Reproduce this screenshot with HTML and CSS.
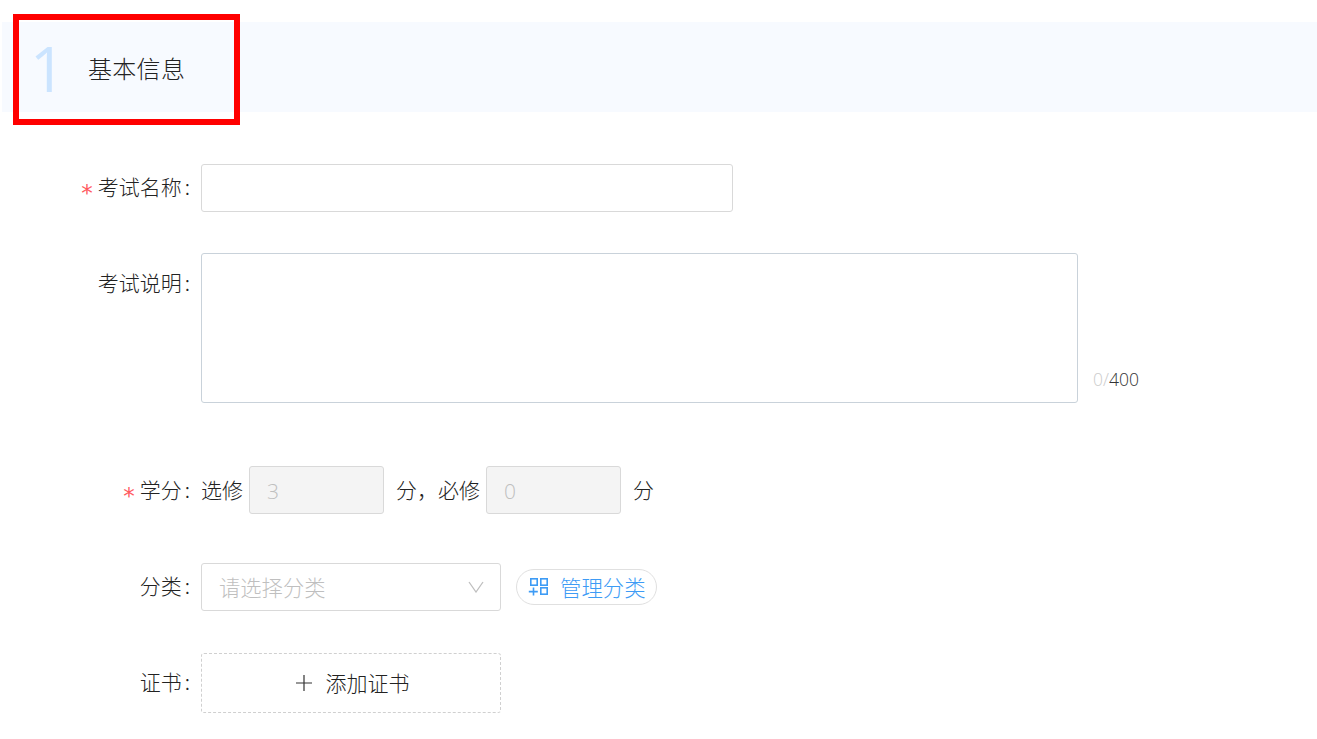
FILE: index.html
```html
<!DOCTYPE html>
<html lang="zh-CN">
<head>
<meta charset="utf-8">
<title>基本信息</title>
<link rel="stylesheet" href="styles.css">
</head>
<body>
<section class="section-head">
  <span class="step">1</span>
  <h2 class="section-title">基本信息</h2>
  <div class="highlight"></div>
</section>
<form class="form">
  <div class="row row-name">
    <label class="label"><i class="req">*</i>考试名称<span class="colon">:</span></label>
    <div class="input name-input"></div>
  </div>
  <div class="row row-desc">
    <label class="label label-top">考试说明<span class="colon">:</span></label>
    <div class="textarea"></div>
    <span class="counter"><span class="count-now">0/</span>400</span>
  </div>
  <div class="row row-credit">
    <label class="label label-credit"><i class="req">*</i>学分<span class="colon">:</span></label>
    <span class="text">选修</span>
    <div class="input credit-input">3</div>
    <span class="text text-mid">分，必修</span>
    <div class="input credit-input">0</div>
    <span class="text text-end">分</span>
  </div>
  <div class="row row-cat">
    <label class="label">分类<span class="colon">:</span></label>
    <div class="input select">
      <span class="select-text">请选择分类</span>
      <svg class="chevron" width="16" height="12" viewBox="0 0 16 12"><path d="M1 1l7 10 7-10" fill="none" stroke="#bfbfbf" stroke-width="1.3"/></svg>
    </div>
    <button type="button" class="manage">
      <svg class="manage-icon" width="20" height="20" viewBox="0 0 20 20" fill="none" stroke="#3d9bf5" stroke-width="1.6"><rect x="2.8" y="1.8" width="6.4" height="6.4"/><rect x="12.8" y="1.8" width="6.4" height="6.4"/><rect x="12.8" y="10.8" width="6.4" height="6.4"/><path d="M.8 14.6h9M5.5 10.6v8"/></svg>
      <span class="manage-text">管理分类</span>
    </button>
  </div>
  <div class="row row-cert">
    <label class="label">证书<span class="colon">:</span></label>
    <button type="button" class="add-cert">
      <svg class="add-icon" width="18" height="18" viewBox="0 0 18 18"><path d="M9 1v16M1 9h16" stroke="#333" stroke-width="1.2"/></svg>
      添加证书
    </button>
  </div>
</form>
</body>
</html>
```
FILE: styles.css
```css
* { box-sizing: border-box; }
html, body { margin: 0; padding: 0; background: #fff; }
body {
  width: 1317px;
  height: 739px;
  overflow: hidden;
  font-family: "Noto Sans CJK SC", "Noto Sans", sans-serif;
  font-size: 21px;
  font-weight: 300;
  color: #222;
}
.section-head {
  position: relative;
  display: flex;
  align-items: center;
  height: 90px;
  margin: 22px 0 0 2px;
  padding-left: 28px;
  background: #f7faff;
}
.step {
  width: 58px;
  padding-top: 2px;
  font-family: "Open Sans", sans-serif;
  font-size: 62px;
  font-weight: 400;
  line-height: 1;
  color: #cbe4ff;
}
.section-title { margin: 0; font-size: 24px; font-weight: 300; letter-spacing: .3px; color: #222; }
.highlight {
  position: absolute;
  left: 11px;
  top: -8px;
  width: 227px;
  height: 111px;
  border: 6px solid #ff0000;
}
.form { display: flex; flex-direction: column; }
.row { display: flex; align-items: center; }
.row-name { margin-top: 52px; }
.row-desc { margin-top: 41px; align-items: flex-start; }
.row-credit { margin-top: 63px; }
.row-cat { margin-top: 49px; }
.row-cert { margin-top: 42px; }
.label {
  width: 201px;
  padding: 0 11px 5px 0;
  text-align: right;
  line-height: 30px;
  white-space: nowrap;
}
.label-top { padding-top: 14px; }
.label-credit { padding-bottom: 3px; }
.colon { padding-left: 3px; }
.req {
  margin-right: 5px;
  font-family: "DejaVu Sans", sans-serif;
  font-size: 23px;
  line-height: 0;
  vertical-align: -6px;
  font-style: normal;
  font-weight: 400;
  color: #ff5a5f;
}
.input {
  height: 48px;
  border: 1px solid #d9d9d9;
  border-radius: 3px;
  background: #fff;
}
.name-input { width: 532px; }
.textarea {
  width: 877px;
  height: 150px;
  border: 1px solid #c9d2da;
  border-radius: 3px;
}
.counter {
  align-self: flex-end;
  margin-left: 15px;
  margin-bottom: 10px;
  font-size: 17.5px;
  line-height: 28px;
  font-family: "Open Sans", sans-serif;
  color: #333;
}
.count-now { color: #ccc; }
.text { padding-bottom: 2px; white-space: nowrap; }
.credit-input {
  width: 135px;
  margin-left: 6px;
  padding-left: 17px;
  line-height: 49px;
  color: #bfbfbf;
  background: #f4f4f4;
  font-family: "Open Sans", sans-serif;
}
.text-mid { margin-left: 12px; }
.text-end { margin-left: 12px; }
.select {
  display: flex;
  align-items: center;
  justify-content: space-between;
  width: 300px;
  padding: 0 16px 0 17px;
  color: #bfbfbf;
}
.select-text { padding-bottom: 2px; font-size: 21.3px; }
.manage {
  display: flex;
  align-items: center;
  height: 36px;
  margin-left: 15px;
  padding: 0 10px 2px 11px;
  border: 1px solid #e0e0e0;
  border-radius: 18px;
  background: #fff;
  color: #3d9bf5;
  font: inherit;
}
.manage-icon { margin: 2px 12px 0 0; }
.manage-text { font-size: 21.4px; }
.add-cert {
  display: flex;
  align-items: center;
  justify-content: center;
  gap: 13px;
  width: 300px;
  height: 60px;
  padding: 0 0 2px 2px;
  border: 1px dashed #d0d0d0;
  border-radius: 3px;
  background: #fff;
  color: #222;
  font: inherit;
}
.add-icon { margin-top: 2px; }
```
